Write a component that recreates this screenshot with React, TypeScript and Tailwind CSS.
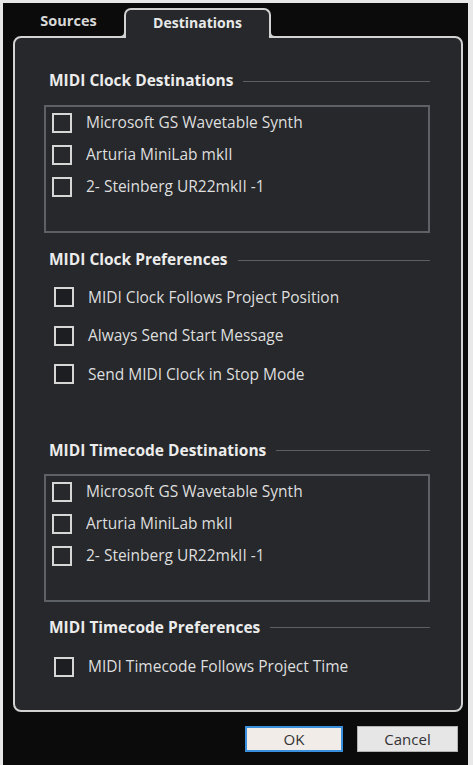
import React from "react";

const font = { fontFamily: '"Open Sans", "Noto Sans", sans-serif' };

function Box({ dark }: { dark?: boolean }) {
  return (
    <span
      className={
        "block w-[20px] h-[20px] border-2 border-[#d6d6d6] shrink-0 " +
        (dark ? "bg-[#1d1e21]" : "bg-transparent")
      }
    />
  );
}

function Heading({ children }: { children: React.ReactNode }) {
  return (
    <div className="flex items-center h-[20px] pl-[5px]">
      <span className="text-[15.5px] font-bold text-[#ececec] whitespace-nowrap">
        {children}
      </span>
      <span className="flex-1 h-px bg-[#5b5e62] ml-[10px]" />
    </div>
  );
}

function ListBox({ items, className }: { items: string[]; className?: string }) {
  return (
    <div className={"border-2 border-[#5d6165] h-[128px] flex flex-col " + (className || "")}>
      {items.map((t) => (
        <div key={t} className="flex items-center h-[32px] pl-[6px]">
          <Box />
          <span className="ml-[14px] text-[15.5px] text-[#dedede]">{t}</span>
        </div>
      ))}
    </div>
  );
}

function PrefRow({ label }: { label: string }) {
  return (
    <div className="flex items-center h-[38.5px] pl-[10px]">
      <Box dark />
      <span className="ml-[14px] text-[15.5px] text-[#dedede]">{label}</span>
    </div>
  );
}

const devices = ["Microsoft GS Wavetable Synth", "Arturia MiniLab mkII", "2- Steinberg UR22mkII -1"];

export default function App() {
  return (
    <div className="w-[473px] h-[765px] bg-[#e8e8e8] pt-[3px] pl-[3px] pr-[5px]" style={font}>
      <div className="h-full bg-[#0b0b0b] flex flex-col pl-[10px] pr-[5px]">
        {/* tabs */}
        <div className="h-[33px] flex items-end relative z-10">
          <div className="w-[111px] h-[30px] flex items-center justify-center text-[14.5px] font-bold text-[#d8d8d8]">
            Sources
          </div>
          <div className="relative w-[147px] h-[30px] pb-[3px] -mb-[2px] border-2 border-b-0 border-[#d2d2d2] rounded-t-[7px] bg-[#26282b] flex items-center justify-center text-[14px] font-bold text-[#e8e8e8]">
            Destinations
            <span className="absolute left-[-8px] bottom-0 w-[8px] h-[8px] border-r-2 border-b-2 border-[#d2d2d2] rounded-br-[6px] bg-[#0b0b0b]" />
            <span className="absolute right-[-8px] bottom-0 w-[8px] h-[8px] border-l-2 border-b-2 border-[#d2d2d2] rounded-bl-[6px] bg-[#0b0b0b]" />
          </div>
        </div>

        {/* panel */}
        <div className="h-[676px] border-2 border-[#d2d2d2] rounded-[8px] bg-[#26282b] flex flex-col pl-[29px] pr-[31px] pt-[33px]">
          <Heading>MIDI Clock Destinations</Heading>
          <ListBox items={devices} className="mt-[14px]" />

          <div className="mt-[17px]">
            <Heading>MIDI Clock Preferences</Heading>
          </div>
          <div className="mt-[8px] flex flex-col">
            <PrefRow label="MIDI Clock Follows Project Position" />
            <PrefRow label="Always Send Start Message" />
            <PrefRow label="Send MIDI Clock in Stop Mode" />
          </div>

          <div className="mt-[47px]">
            <Heading>MIDI Timecode Destinations</Heading>
          </div>
          <ListBox items={devices} className="mt-[13px]" />

          <div className="mt-[16px]">
            <Heading>MIDI Timecode Preferences</Heading>
          </div>
          <div className="mt-[10px]">
            <PrefRow label="MIDI Timecode Follows Project Time" />
          </div>
        </div>

        {/* buttons */}
        <div className="mt-[14px] flex justify-end gap-[14px] pr-[5px]">
          <button className="w-[98px] h-[26px] bg-[#f1ece8] border-2 border-[#3a8fdc] text-[15px] text-[#333333] flex items-center justify-center">
            OK
          </button>
          <button className="w-[101px] h-[26px] bg-[#e6e6e6] border border-[#b3b3b3] text-[15px] text-[#333333] flex items-center justify-center">
            Cancel
          </button>
        </div>
      </div>
    </div>
  );
}
